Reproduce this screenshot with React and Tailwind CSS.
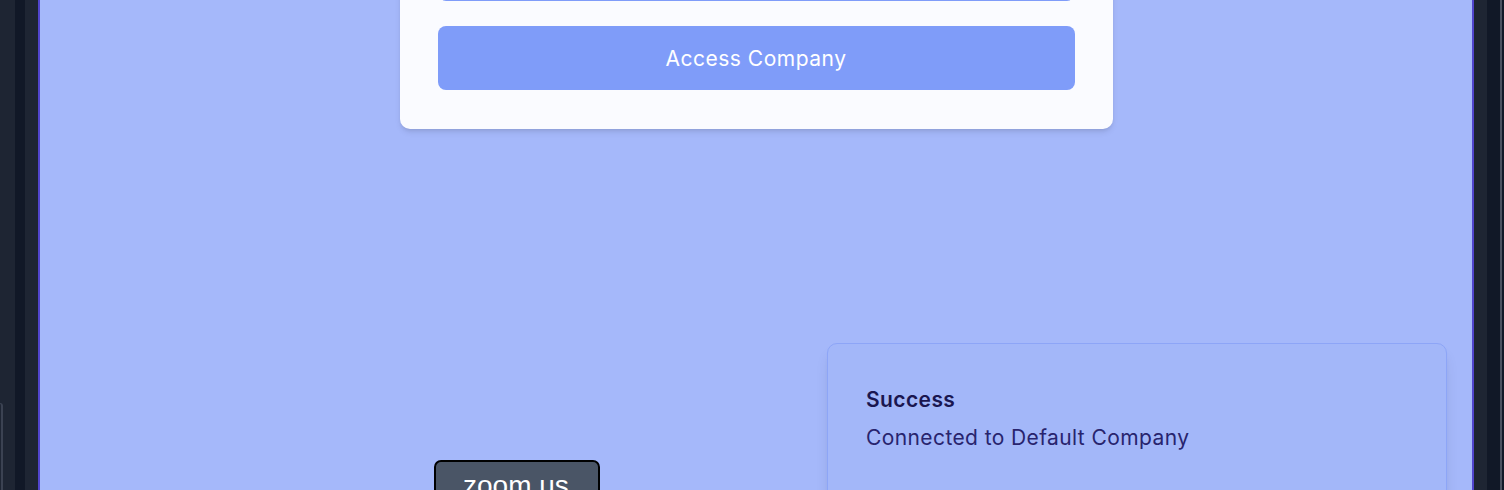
export default function App() {
  return (
    <div className="flex h-[490px] w-[1504px] overflow-hidden bg-[#111827] font-['Inter',sans-serif]">
      {/* left chrome */}
      <div className="flex w-[15px] bg-[#1e2533]">
        <div className="mt-[403px] h-[90px] w-[3px] rounded-tr-[3px] border-r-2 border-t border-[#3b4252]" />
      </div>
      <div className="w-[10px] bg-[#111827]" />
      <div className="w-[13px] bg-[#1e2533]" />

      {/* main */}
      <main className="relative flex w-[1436px] flex-col items-center border-x-2 border-[#5145cd] bg-[#a5b8fa]">
        <div className="mt-[-87px] w-[713px] rounded-[10px] bg-[#fafbff] px-[38px] pt-[38px] pb-[39px] shadow-md">
          <div className="h-[50px] rounded-lg border border-[#7f9cf9] bg-white" />
          <button className="mt-[25px] flex h-[64px] w-full items-center justify-center rounded-lg bg-[#7f9cf9] pt-px text-[21px] tracking-[0.5px] text-white">
            Access Company
          </button>
        </div>

        {/* toast */}
        <div className="absolute left-[787px] top-[343px] h-[170px] w-[620px] rounded-[10px] border border-[#8da5f7] bg-[#a3b7f9] px-[38px] pt-[42px] shadow-lg">
          <div className="text-[21px] font-semibold leading-[28px] tracking-[0.4px] text-[#1a1650]">Success</div>
          <div className="mt-[10px] text-[21px] leading-[28px] tracking-[0.4px] text-[#28246e]">Connected to Default Company</div>
        </div>

        {/* zoom.us sharing badge */}
        <div className="absolute left-[394px] top-[460px] h-[50px] w-[166px] rounded-[7px] border-2 border-black bg-[#4a5566] pl-[27px] pt-[8px] font-['Liberation_Sans',sans-serif] text-[28px] leading-[32px] text-white">
          zoom.us
        </div>
      </main>

      {/* right chrome */}
      <div className="w-[13px] bg-[#1e2533]" />
      <div className="w-[13px] bg-[#111827]" />
      <div className="w-[2px] bg-[#4b5160]" />
      <div className="flex-1 bg-[#111827]" />
    </div>
  );
}
